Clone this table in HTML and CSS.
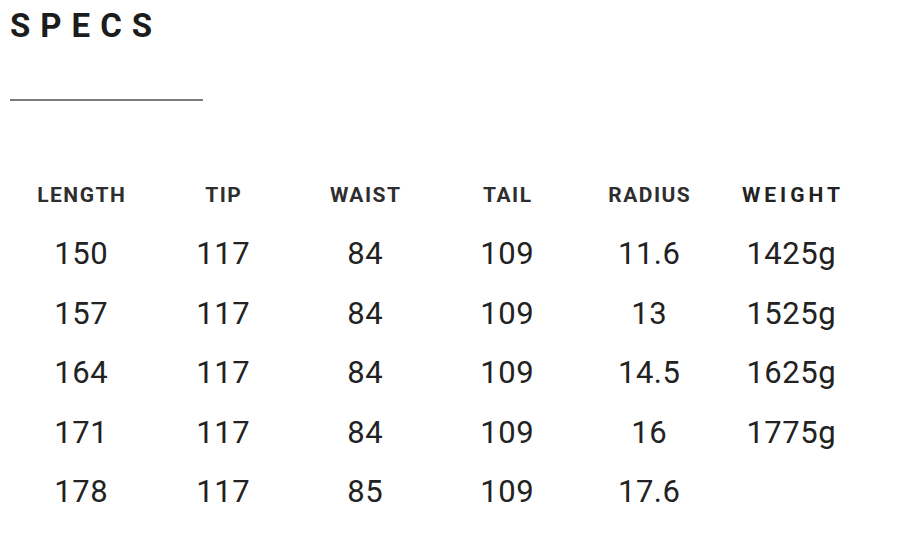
FILE: index.html
```html
<!DOCTYPE html>
<html>
<head>
<meta charset="utf-8">
<link rel="stylesheet" href="styles.css">
</head>
<body>
<div class="page">
  <h1 class="title">SPECS</h1>
  <div class="rule"></div>
  <div class="specs">
    <div class="head">LENGTH</div><div class="head">TIP</div><div class="head">WAIST</div><div class="head">TAIL</div><div class="head">RADIUS</div><div class="head head-wide">WEIGHT</div>
    <div class="cell">150</div><div class="cell">117</div><div class="cell">84</div><div class="cell">109</div><div class="cell">11.6</div><div class="cell">1425g</div>
    <div class="cell">157</div><div class="cell">117</div><div class="cell">84</div><div class="cell">109</div><div class="cell">13</div><div class="cell">1525g</div>
    <div class="cell">164</div><div class="cell">117</div><div class="cell">84</div><div class="cell">109</div><div class="cell">14.5</div><div class="cell">1625g</div>
    <div class="cell">171</div><div class="cell">117</div><div class="cell">84</div><div class="cell">109</div><div class="cell">16</div><div class="cell">1775g</div>
    <div class="cell">178</div><div class="cell">117</div><div class="cell">85</div><div class="cell">109</div><div class="cell">17.6</div><div class="cell"></div>
  </div>
</div>
</body>
</html>
```

FILE: styles.css
```css
html, body {
  margin: 0;
  padding: 0;
  background: #ffffff;
}

.page {
  padding: 6px 10px 0 10px;
  font-family: Roboto, "Liberation Sans", sans-serif;
  color: #222222;
}

.title {
  margin: 0;
  font-size: 33px;
  font-weight: 700;
  letter-spacing: 10px;
  line-height: normal;
  color: #1c1c1c;
}

.rule {
  margin-top: 54px;
  width: 193px;
  height: 2px;
  background: #7b7b7b;
}

.specs {
  margin-top: 84px;
  display: grid;
  grid-template-columns: repeat(6, 142px);
  grid-template-rows: 39px repeat(5, 59.5px);
}

.head {
  height: 20px;
  font-size: 21px;
  font-weight: 700;
  line-height: 20px;
  letter-spacing: 1.5px;
  padding-left: 1.5px;
  text-align: center;
  color: #2e2e2e;
}

.head-wide {
  letter-spacing: 4px;
  padding-left: 4px;
  color: #222222;
}

.cell {
  font-size: 31px;
  line-height: 59.5px;
  letter-spacing: 0.5px;
  padding-left: 0.5px;
  text-align: center;
  color: #222222;
}
```
